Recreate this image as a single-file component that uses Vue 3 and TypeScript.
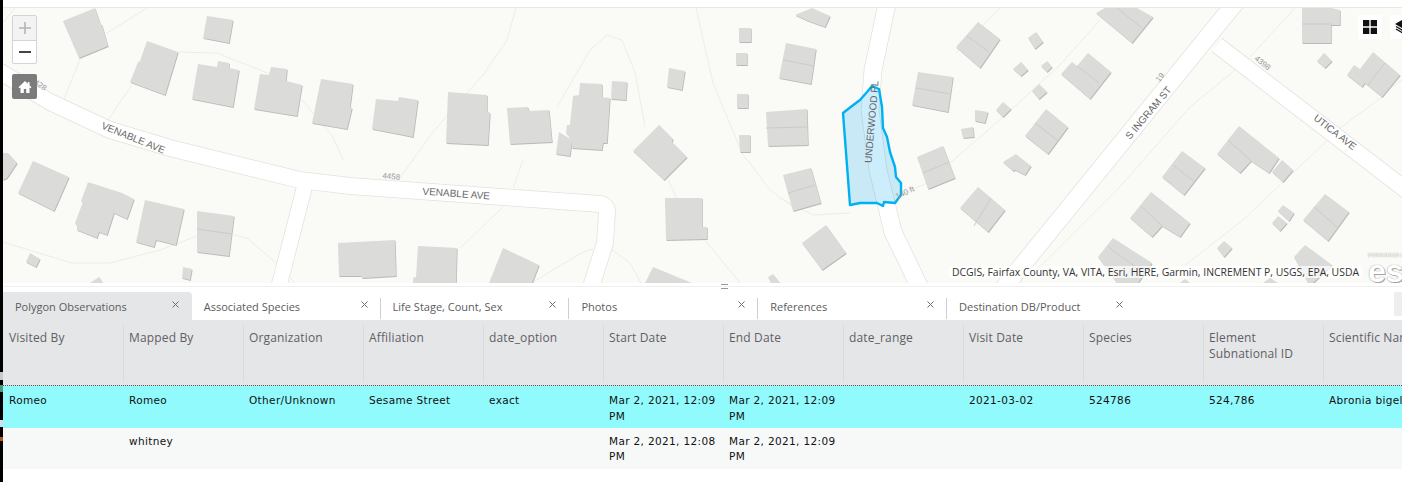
<script setup lang="ts">
// building footprints, in page coordinates (the svg viewBox matches the page)
const buildings: string[] = [
  '63,21 95,8 100,23 102,25 108,46 79,58',
  '207,16 233,20 229,43 203,38',
  '147,41 178,52 165,95 130,82 138,62 140,61',
  '198,64 217,67 218,61 229,63 229,68 239,70 233,107 192,99',
  '271,67 287,69 286,81 302,85 297,116 254,109 260,74 269,75',
  '321,79 353,84 350,107 352,108 347,129 312,123',
  '376,99 398,101 399,97 418,100 413,137 393,133 372,129',
  '448,92 487,95 487,111 490,113 488,145 446,143',
  '507,108 528,107 529,111 549,110 552,142 510,144',
  '580,83 602,84 602,97 610,98 607,143 603,143 602,150 572,148 571,139 566,133 567,125 570,125 573,96 579,95',
  '612,81 627,82 626,100 611,99',
  '559,132 572,140 570,156 556,154',
  '659,125 673,139 672,142 687,157 664,180 648,165 633,151',
  '669,68 685,71 682,90 667,87',
  '665,198 702,198 702,227 707,227 707,239 666,240',
  '739,28 751,28 751,42 739,42',
  '736,53 747,53 747,65 736,65',
  '737,94 748,94 748,108 737,108',
  '739,135 750,135 750,152 740,152',
  '338,243 395,240 396,276 362,278 361,276 339,276',
  '418,246 457,248 456,283 413,283 413,278 416,277',
  '503,248 539,265 532,283 489,283',
  '653,267 692,283 645,283',
  '773,274 780,283 771,283 768,277',
  '795,15 812,8 830,16 825,27 808,21',
  '786,43 816,49 811,84 779,78',
  '766,112 807,109 808,145 768,146',
  '783,175 811,168 821,203 793,211',
  '918,72 953,77 948,112 912,105',
  '917,157 943,146 955,178 928,189',
  '961,129 973,127 974,137 963,138',
  '975,110 988,112 985,123 975,121',
  '802,243 826,225 846,253 822,270',
  '960,208 978,187 1005,210 988,232',
  '956,47 978,22 1000,39 980,68',
  '1096,13 1105,8 1137,8 1153,17 1132,43',
  '1028,38 1036,32 1043,42 1035,49',
  '1013,69 1021,62 1028,70 1021,76',
  '1041,66 1047,61 1052,67 1047,72',
  '1061,74 1072,62 1077,66 1088,53 1111,72 1090,99',
  '1032,91 1039,84 1047,92 1039,99',
  '996,110 1003,102 1011,109 1003,117',
  '1025,136 1046,109 1068,127 1048,154',
  '1003,162 1016,154 1022,159 1031,166 1025,175 1015,170 1013,171',
  '1162,177 1182,151 1205,168 1184,195',
  '1217,154 1239,126 1279,158 1269,173 1251,161 1240,173',
  '1272,172 1282,160 1293,170 1283,182',
  '1130,218 1151,192 1190,223 1180,237 1162,226 1152,237',
  '1278,211 1283,205 1294,213 1289,221',
  '1272,223 1278,216 1287,223 1280,231',
  '1303,220 1325,194 1349,212 1328,241',
  '1217,248 1224,241 1232,248 1224,257',
  '1098,257 1113,238 1152,263 1138,283 1117,283',
  '1294,257 1305,245 1332,265 1313,283 1308,283',
  '1302,8 1331,8 1340,10 1340,25 1331,25 1331,43 1302,43',
  '1317,61 1324,53 1332,61 1325,68',
  '1347,75 1354,65 1360,69 1373,52 1400,75 1382,97 1365,83 1362,87',
  '1180,283 1185,279 1190,283',
  '1263,283 1270,278 1278,283',
  '3,153 8,153 17,163 7,178 3,180',
  '33,161 69,177 54,211 18,193',
  '88,182 122,193 134,199 127,219 114,213 107,235 99,232 97,238 77,230 77,226 75,223 83,202 81,201',
  '145,200 184,209 176,245 156,240 154,247 136,242',
  '197,211 234,216 229,256 197,252',
  '26,262 30,253 40,259 36,267',
  '183,267 192,269 190,280 182,278',
  '90,283 99,277 103,283'
]

// roof ridge lines
const ridges: string[] = [
  'M783 60 814 66', 'M766 128 808 127', 'M788 193 815 185', 'M916 88 950 94',
  'M923 173 949 162', 'M991 198 974 226', 'M967 36 989 52', 'M1117 8 1142 28',
  'M1077 66 1099 83', 'M1035 123 1057 140', 'M1173 165 1195 182', 'M1228 140 1251 161',
  'M1141 206 1162 226', 'M1314 207 1337 227', 'M1108 247 1140 270', 'M1302 24 1331 24',
  'M1385 63 1368 85', 'M197 229 232 234'
]

const roads: { d: string; w: number }[] = [
  { d: 'M-6 68 50 102 110 130 170 148 300 180 350 186 600 204 Q607 205 607 212 L605 243 590 290', w: 16 },
  { d: 'M305 185 278 290', w: 15 },
  { d: 'M887 4 873 70 870 110 878 170 893 232 921 290', w: 17 },
  { d: 'M1236 2 1002 290', w: 17 },
  { d: 'M1217 45 1410 193', w: 16 }
]

const trails: string[] = [
  'M15 8 3 23', 'M147 8 123 23 107 33', 'M80 59 63 102', 'M132 85 108 120',
  'M178 52 217 53 270 74', 'M302 100 333 137 343 160', 'M516 8 507 40 483 75 432 133 400 178',
  'M557 107 590 50 607 35 622 40 635 72 645 127', 'M523 160 513 188', 'M503 207 460 248',
  'M533 282 583 252 593 249', 'M612 250 630 263 641 283', 'M668 180 677 198', 'M705 240 740 283',
  'M696 8 713 83 742 153 770 190 793 207', 'M3 242 72 263 110 263 160 250 197 236',
  'M233 235 247 238 275 262 295 283', 'M780 198 813 215 850 213', 'M900 195 927 183',
  'M950 163 1003 117 1060 65 1100 20', 'M1000 8 956 53', 'M1295 8 1250 57',
  'M1235 70 1190 107 1117 190 1040 267', 'M1328 140 1283 182 1243 220 1183 267',
  'M1340 128 1382 97', 'M1390 88 1402 80'
]

const parcel =
  '843,113 852,106 860,100 867,92 872,86 879,89 882,107 883,128 887,137 890,152 895,167 896,177 901,183 901,195 895,203 884,202 883,206 877,203 860,203 850,205'

const labels: { text: string; x: number; y: number; a: number; cls: string }[] = [
  { text: 'VENABLE AVE', x: 132, y: 141, a: 22, cls: 'road-label' },
  { text: 'VENABLE AVE', x: 456, y: 197, a: 4, cls: 'road-label' },
  { text: 'UNDERWOOD PL', x: 875, y: 122, a: -85, cls: 'road-label' },
  { text: 'S INGRAM ST', x: 1151, y: 115, a: -50, cls: 'road-label' },
  { text: 'UTICA AVE', x: 1333, y: 135, a: 38, cls: 'road-label' },
  { text: '4458', x: 391, y: 179, a: 5, cls: 'num-label' },
  { text: '4398', x: 1261, y: 65, a: 38, cls: 'num-label' },
  { text: '19', x: 1162, y: 79, a: -50, cls: 'num-label' },
  { text: '4428', x: 37, y: 86, a: 35, cls: 'num-label' },
  { text: '140 ft', x: 906, y: 195, a: -25, cls: 'num-label' }
]

const tabs = [
  'Polygon Observations',
  'Associated Species',
  'Life Stage, Count, Sex',
  'Photos',
  'References',
  'Destination DB/Product'
]

const columns = [
  'Visited By', 'Mapped By', 'Organization', 'Affiliation', 'date_option', 'Start Date',
  'End Date', 'date_range', 'Visit Date', 'Species', 'Element Subnational ID', 'Scientific Name'
]

const rows: string[][] = [
  ['Romeo', 'Romeo', 'Other/Unknown', 'Sesame Street', 'exact', 'Mar 2, 2021, 12:09 PM',
    'Mar 2, 2021, 12:09 PM', '', '2021-03-02', '524786', '524,786', 'Abronia bigelovii'],
  ['', 'whitney', '', '', '', 'Mar 2, 2021, 12:08 PM', 'Mar 2, 2021, 12:09 PM', '', '', '', '', '']
]
</script>

<template>
  <div class="page">
    <div class="strip">
      <i class="bit bit-grey"></i>
      <i class="bit bit-green"></i>
      <i class="bit bit-blue"></i>
      <i class="bit bit-orange"></i>
    </div>

    <div class="main">
      <div class="topbar"></div>

      <div class="map">
        <svg class="map-svg" viewBox="3 8 1399 275" width="1399" height="275">
          <rect x="3" y="8" width="1399" height="275" fill="#fafaf7" />
          <g class="soft">
            <path v-for="t in trails" :key="t" :d="t" fill="none" stroke="#eeede3" stroke-width="1" />
            <path v-for="r in roads" :key="'c' + r.d" :d="r.d" fill="none" stroke="#e2e2dc" :stroke-width="r.w + 1.5" />
            <path v-for="r in roads" :key="'r' + r.d" :d="r.d" fill="none" stroke="#ffffff" :stroke-width="r.w" />
            <polygon v-for="b in buildings" :key="'s' + b" :points="b" fill="#b9b9b7" transform="translate(0.7 1)" />
            <polygon v-for="b in buildings" :key="b" :points="b" fill="#dbdbd9" />
            <path v-for="l in ridges" :key="l" :d="l" stroke="#cbcbc9" stroke-width="1" fill="none" />
          </g>
          <polygon :points="parcel" fill="#00a6f0" fill-opacity="0.2" stroke="#00b1f2" stroke-width="2.4" stroke-linejoin="round" />
          <text
            v-for="l in labels"
            :key="l.text + l.x"
            :class="l.cls"
            text-anchor="middle"
            :transform="`translate(${l.x} ${l.y}) rotate(${l.a})`"
          >{{ l.text }}</text>
        </svg>

        <div class="zoom-box">
          <div class="zoom-btn zoom-in">
            <svg width="12" height="12" viewBox="0 0 12 12"><path d="M6 0v12M0 6h12" stroke="#b4b4b4" stroke-width="1.6" /></svg>
          </div>
          <div class="zoom-btn">
            <svg width="12" height="12" viewBox="0 0 12 12"><path d="M0 6h12" stroke="#444" stroke-width="2" /></svg>
          </div>
        </div>

        <div class="home-btn">
          <svg width="14" height="14" viewBox="0 0 14 14">
            <path d="M7 1 0.5 7.2 1.6 8.3 2.5 7.5V13H5.8V9H8.2V13H11.5V7.5L12.4 8.3 13.5 7.2 11.5 5.3V2H9.8V3.7Z" fill="#fff" />
          </svg>
        </div>

        <div class="gallery-btn">
          <svg width="14" height="14" viewBox="0 0 14 14">
            <path d="M0 0h6.3v6.3H0zM7.7 0H14v6.3H7.700zM0 7.700h6.300V14H0zM7.700 7.700H14V14H7.700z" fill="#111" />
          </svg>
        </div>
        <div class="layers-btn">
          <svg width="14" height="14" viewBox="0 0 14 14">
            <path d="M7 0 14 4 7 8 0 4Z" fill="#111" />
            <path d="M1 6.5 7 10 13 6.5M1 9 7 12.5 13 9" fill="none" stroke="#111" stroke-width="1.3" />
          </svg>
        </div>

        <div class="attribution">DCGIS, Fairfax County, VA, VITA, Esri, HERE, Garmin, INCREMENT P, USGS, EPA, USDA</div>
        <div class="esri">
          <span class="esri-small">POWERED BY</span>
          <span class="esri-word">esri</span>
        </div>
      </div>

      <div class="splitter"><span class="grip"></span></div>

      <div class="tabs">
        <div v-for="(t, i) in tabs" :key="t" class="tab" :class="{ active: i === 0 }">
          <span class="tab-title">{{ t }}</span>
          <svg class="tab-close" width="7" height="7" viewBox="0 0 7 7"><path d="M.5.5l6 6M6.5.5l-6 6" stroke="#6e6e6e" stroke-width="1" /></svg>
        </div>
        <div class="tab-spacer"><span class="tab-menu"></span></div>
      </div>

      <div class="table">
        <div class="head">
          <div v-for="c in columns" :key="c" class="head-cell">{{ c }}</div>
        </div>
        <div v-for="(r, ri) in rows" :key="ri" class="row" :class="{ selected: ri === 0 }">
          <div v-for="(v, ci) in r" :key="ci" class="cell">{{ v }}</div>
        </div>
      </div>
    </div>
  </div>
</template>

<style scoped>
.page {
  display: flex;
  width: 1402px;
  height: 482px;
  overflow: hidden;
  background: #fff;
  font-family: "Open Sans", "Liberation Sans", sans-serif;
}
.strip {
  flex: none;
  display: flex;
  flex-direction: column;
  width: 3px;
  height: 482px;
  background: #000;
}
.bit {
  display: block;
  height: 8px;
}
.bit-grey {
  margin-top: 372px;
  background: #c9c9c9;
}
.bit-green {
  margin-top: 5px;
  height: 7px;
  background: #4a9a78;
}
.bit-blue {
  margin-top: 28px;
  height: 7px;
  background: #cfe0ef;
}
.bit-orange {
  margin-top: 10px;
  height: 4px;
  background: #b5541c;
}
.main {
  flex: 1;
  min-width: 0;
  display: flex;
  flex-direction: column;
}
.topbar {
  height: 7px;
  border-bottom: 1px solid #e8e8e8;
}
.map {
  position: relative;
  height: 275px;
  overflow: hidden;
}
.map-svg {
  display: block;
}
.soft {
  filter: blur(0.35px);
}
.road-label {
  font-family: "Liberation Sans", Arial, sans-serif;
  font-size: 10px;
  fill: #666;
}
.num-label {
  font-family: "Liberation Sans", Arial, sans-serif;
  font-size: 8px;
  fill: #999;
}
.zoom-box {
  position: absolute;
  left: 9px;
  top: 7px;
  width: 25px;
  height: 49px;
  box-sizing: border-box;
  border: 1px solid #d4d4d4;
  border-radius: 2px;
  background: #fff;
}
.zoom-btn {
  display: flex;
  align-items: center;
  justify-content: center;
  height: 23.5px;
}
.zoom-in {
  background: #f3f3f3;
  border-bottom: 1px solid #d4d4d4;
}
.home-btn {
  position: absolute;
  left: 9px;
  top: 66px;
  width: 25px;
  height: 25px;
  display: flex;
  align-items: center;
  justify-content: center;
  background: #7b7b7b;
  border-radius: 2px;
}
.gallery-btn,
.layers-btn {
  position: absolute;
  top: 7px;
  width: 24px;
  height: 24px;
  display: flex;
  align-items: center;
  justify-content: center;
  background: #fff;
}
.gallery-btn {
  left: 1355px;
}
.layers-btn {
  left: 1387px;
}
.attribution {
  position: absolute;
  right: 40px;
  bottom: 5px;
  padding: 0 3px;
  height: 12px;
  line-height: 12px;
  font-size: 10.4px;
  color: #333;
  white-space: nowrap;
  background: rgba(255, 255, 255, 0.7);
}
.esri {
  position: absolute;
  left: 1365px;
  top: 244px;
  width: 34px;
  height: 31px;
  color: #fff;
  font-family: "Liberation Sans", Arial, sans-serif;
}
.esri-small {
  display: block;
  font-size: 6px;
  font-weight: 700;
  line-height: 7px;
  white-space: nowrap;
  text-shadow: 0 0 1px #777;
}
.esri-word {
  display: block;
  font-size: 32px;
  font-weight: 700;
  line-height: 24px;
  text-shadow: 0 0 1px #777, 1px 1px 0 #aaa;
}
.splitter {
  position: relative;
  height: 9px;
  box-sizing: border-box;
}
.splitter::after {
  content: "";
  position: absolute;
  left: 0;
  right: 0;
  top: 3px;
  border-top: 1px solid #efefef;
}
.grip {
  position: absolute;
  left: 718px;
  top: 1px;
  width: 7px;
  height: 3px;
  border-top: 1px solid #999;
  border-bottom: 1px solid #999;
  z-index: 1;
}
.tabs {
  display: flex;
  height: 28px;
}
.tab {
  flex: none;
  display: flex;
  width: 188.8px;
  height: 28px;
  box-sizing: border-box;
  padding: 0 13px 0 12px;
  position: relative;
  font-size: 11px;
  color: #5c5c5c;
  line-height: 29px;
}
.tab::after {
  content: "";
  position: absolute;
  right: 0;
  top: 6px;
  height: 21px;
  border-right: 1px solid #cfcfcf;
}
.tab.active {
  background: #e5e6e8;
  border-radius: 0 4px 0 0;
}
.tab.active::after,
.tab:nth-child(6)::after {
  display: none;
}
.tab-title {
  flex: 1;
  white-space: nowrap;
}
.tab-close {
  margin-top: 9px;
}
.tab-spacer {
  flex: 1;
  display: flex;
  justify-content: flex-end;
}
.tab-menu {
  width: 8px;
  height: 24px;
  background: #eeeeee;
  border-radius: 2px 0 0 2px;
}
.table {
  overflow: hidden;
}
.head {
  display: flex;
  height: 66px;
  box-sizing: border-box;
  padding: 5px 0 0 1px;
  background: #e5e6e8;
  border-bottom: 1px dotted #555;
}
.head-cell {
  flex: none;
  width: 120px;
  height: 56px;
  box-sizing: border-box;
  padding: 5px 6px 0 5px;
  border-right: 1px solid #d8d9db;
  font-size: 12px;
  line-height: 16px;
  letter-spacing: 0.15px;
  color: #5f5f65;
}
.row {
  display: flex;
  height: 41px;
  background: #f7f9f9;
}
.row .cell {
  line-height: 15px;
}
.row.selected {
  height: 42px;
  background: #90fafd;
}
.row.selected .cell {
  line-height: 16px;
}
.cell {
  flex: none;
  width: 120px;
  box-sizing: border-box;
  padding: 6px 4px 0 6px;
  font-family: "DejaVu Sans", Verdana, sans-serif;
  font-size: 10.5px;
  letter-spacing: 0.35px;
  color: #111;
}
</style>

<style>
html,
body {
  margin: 0;
  overflow: hidden;
  background: #fff;
}
</style>
